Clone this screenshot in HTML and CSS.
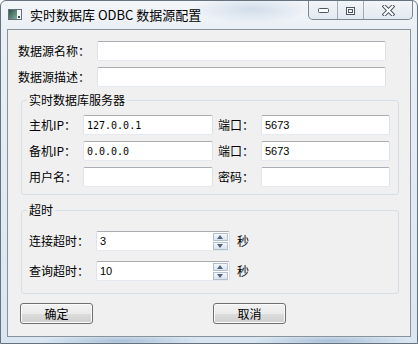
FILE: index.html
```html
<!DOCTYPE html>
<html lang="zh-CN">
<head>
    <meta charset="UTF-8">
    <meta name="viewport" content="width=device-width, initial-scale=1.0">
    <title>实时数据库 ODBC 数据源配置</title>
    <link rel="stylesheet" href="styles.css">
</head>
<body>
    <div class="window">
        <div class="titlebar">
            <svg class="app-icon" width="14" height="11" viewBox="0 0 14 11">
                <defs>
                    <linearGradient id="ig" x1="0" y1="0" x2="1" y2="1">
                        <stop offset="0" stop-color="#2c5246"/>
                        <stop offset="1" stop-color="#7fb0a0"/>
                    </linearGradient>
                </defs>
                <rect x="0.5" y="0.5" width="13" height="10" fill="#f4f6f8" stroke="#66717c"/>
                <rect x="1" y="1" width="8" height="9" fill="url(#ig)"/>
                <rect x="10" y="7" width="2" height="2" fill="#3d4a56"/>
            </svg>
            <span class="title">实时数据库 ODBC 数据源配置</span>
            <div class="caption">
                <div class="cap-btn cap-min">
                    <svg width="11" height="5" viewBox="0 0 11 5"><rect x="0.5" y="0.5" width="10" height="4" rx="1" fill="#fff" stroke="#4b5662"/></svg>
                </div>
                <div class="cap-btn cap-max">
                    <svg width="9" height="8" viewBox="0 0 9 8"><rect x="0.5" y="0.5" width="8" height="7" fill="#fff" stroke="#4b5662"/><rect x="2.5" y="2.5" width="4" height="3" fill="none" stroke="#4b5662"/></svg>
                </div>
                <div class="cap-btn cap-close">
                    <svg width="13" height="11" viewBox="0 0 13 11">
                        <path d="M2.5 1.5 L10.5 9.5 M10.5 1.5 L2.5 9.5" stroke="#4b5662" stroke-width="4" stroke-linecap="square"/>
                        <path d="M2.5 1.5 L10.5 9.5 M10.5 1.5 L2.5 9.5" stroke="#fff" stroke-width="2" stroke-linecap="square"/>
                    </svg>
                </div>
            </div>
        </div>

        <div class="client">
            <div class="row">
                <label class="lbl lbl-wide">数据源名称：</label>
                <input class="edit edit-long" type="text">
            </div>
            <div class="row">
                <label class="lbl lbl-wide">数据源描述：</label>
                <input class="edit edit-long" type="text">
            </div>

            <fieldset class="group group-server">
                <legend>实时数据库服务器</legend>
                <div class="row">
                    <label class="lbl lbl-ip">主机IP：</label>
                    <input class="edit edit-ip mono" type="text" value="127.0.0.1">
                    <label class="lbl lbl-port">端口：</label>
                    <input class="edit edit-port" type="text" value="5673">
                </div>
                <div class="row">
                    <label class="lbl lbl-ip">备机IP：</label>
                    <input class="edit edit-ip mono" type="text" value="0.0.0.0">
                    <label class="lbl lbl-port">端口：</label>
                    <input class="edit edit-port" type="text" value="5673">
                </div>
                <div class="row">
                    <label class="lbl lbl-ip">用户名：</label>
                    <input class="edit edit-ip" type="text">
                    <label class="lbl lbl-port">密码：</label>
                    <input class="edit edit-port" type="password">
                </div>
            </fieldset>

            <fieldset class="group group-timeout">
                <legend>超时</legend>
                <div class="row">
                    <label class="lbl lbl-time">连接超时：</label>
                    <div class="spin">
                        <input type="text" value="3">
                        <div class="spin-btns">
                            <span class="spin-btn spin-up"></span>
                            <span class="spin-btn spin-down"></span>
                        </div>
                    </div>
                    <span class="unit">秒</span>
                </div>
                <div class="row">
                    <label class="lbl lbl-time">查询超时：</label>
                    <div class="spin">
                        <input type="text" value="10">
                        <div class="spin-btns">
                            <span class="spin-btn spin-up"></span>
                            <span class="spin-btn spin-down"></span>
                        </div>
                    </div>
                    <span class="unit">秒</span>
                </div>
            </fieldset>

            <div class="buttons">
                <button class="btn">确定</button>
                <button class="btn">取消</button>
            </div>
        </div>
    </div>
</body>
</html>
```

FILE: styles.css
```css
body {
    margin: 0;
    font-family: "Noto Sans CJK SC", sans-serif;
    font-size: 12px;
    color: #000;
}
.window {
    width: 418px;
    height: 344px;
    box-sizing: border-box;
    border: 1px solid #66737f;
    border-radius: 6px 6px 0 0;
    padding: 0 6px 6px;
    overflow: hidden;
    background:
        radial-gradient(ellipse 60px 14px at 250px 8px, rgba(150, 180, 210, 0.35), rgba(150, 180, 210, 0)),
        radial-gradient(ellipse 80px 6px at 120px 340px, rgba(80, 120, 170, 0.35), rgba(80, 120, 170, 0)),
        radial-gradient(ellipse 80px 6px at 330px 340px, rgba(80, 120, 170, 0.35), rgba(80, 120, 170, 0)),
        linear-gradient(#f4f6f9 0, #e9eff5 30px, #d9e6f1 100%);
}
.titlebar {
    display: flex;
    height: 28px;
}
.app-icon {
    margin: 8px 0 0 1px;
    flex: none;
}
.title {
    margin: 6px auto 0 8px;
    font-size: 13px;
    line-height: 16px;
    white-space: nowrap;
}
.caption {
    display: flex;
    height: 20px;
    margin: -1px -2px 0 0;
    box-sizing: border-box;
    border: 1px solid #7d8893;
    border-top: none;
    border-radius: 0 0 5px 5px;
    background: linear-gradient(#f3f6f9, #e2e9f0);
    overflow: hidden;
}
.cap-btn {
    display: flex;
    justify-content: center;
    align-items: center;
    box-sizing: border-box;
    height: 19px;
    padding-top: 2px;
}
.cap-min {
    width: 29px;
    border-right: 1px solid #a3adb7;
}
.cap-max {
    width: 26px;
    border-right: 1px solid #a3adb7;
}
.cap-close {
    width: 48px;
}
.client {
    height: 308px;
    box-sizing: border-box;
    border: 1px solid #89939c;
    background: #f0f0f0;
    padding: 11px 0 0 10px;
}
.row {
    display: flex;
    align-items: center;
    height: 20px;
}
.row + .row {
    margin-top: 6px;
}
.lbl {
    flex: none;
    line-height: 14px;
    white-space: nowrap;
}
.lbl-wide {
    width: 79px;
}
.lbl-ip {
    width: 54px;
}
.lbl-port {
    width: 43px;
    margin-left: 5px;
}
.lbl-time {
    width: 67px;
}
.edit {
    box-sizing: border-box;
    height: 20px;
    margin: 0;
    padding: 0 3px;
    border: 1px solid;
    border-color: #abadb3 #dbdfe6 #e3e9ef #e2e3ea;
    border-radius: 2px;
    background: #fff;
    font-family: "Liberation Sans", sans-serif;
    font-size: 11px;
    color: #000;
    outline: none;
}
.mono {
    font-family: "DejaVu Sans Mono", monospace;
    font-size: 10px;
}
.edit-long {
    width: 289px;
}
.edit-ip {
    width: 130px;
}
.edit-port {
    width: 129px;
}
.group {
    box-sizing: border-box;
    width: 378px;
    margin: 0 0 0 3px;
    border: 1px solid #d5dfe5;
    border-radius: 3px;
    padding: 8px 0 7px 7px;
}
.group legend {
    padding: 0 2px;
    margin-left: -2px;
    line-height: 14px;
}
.group-server {
    margin-top: 6px;
}
.group-timeout {
    margin-top: 8px;
    padding-top: 14px;
    padding-bottom: 12px;
}
.group-timeout .row + .row {
    margin-top: 10px;
}
.spin {
    display: flex;
    align-items: center;
    box-sizing: border-box;
    width: 134px;
    height: 20px;
    border: 1px solid;
    border-color: #abadb3 #dbdfe6 #e3e9ef #e2e3ea;
    border-radius: 2px;
    background: #fff;
}
.spin input {
    flex: 1;
    min-width: 0;
    height: 18px;
    border: none;
    padding: 0 3px;
    margin: 0;
    font-family: "Liberation Sans", sans-serif;
    font-size: 11px;
    outline: none;
    background: transparent;
}
.spin-btns {
    display: flex;
    flex-direction: column;
    gap: 1px;
    margin-right: 1px;
}
.spin-btn {
    position: relative;
    box-sizing: border-box;
    width: 15px;
    height: 8px;
    border: 1px solid #b4bfcc;
    background: linear-gradient(#f6f8fb, #dbe3ec);
}
.spin-btn::after {
    content: "";
    position: absolute;
    left: 3px;
    border-left: 3.5px solid transparent;
    border-right: 3.5px solid transparent;
}
.spin-up::after {
    top: 1px;
    border-bottom: 4px solid #4e6384;
}
.spin-down::after {
    top: 1px;
    border-top: 4px solid #4e6384;
}
.unit {
    margin-left: 7px;
    line-height: 14px;
}
.buttons {
    display: flex;
    gap: 120px;
    margin-top: 9px;
    padding-left: 2px;
}
.btn {
    width: 73px;
    height: 21px;
    padding: 0;
    border: 1px solid #707070;
    border-radius: 3px;
    background: linear-gradient(#f2f2f2 0%, #ebebeb 50%, #dddddd 51%, #cfcfcf 100%);
    box-shadow: inset 0 0 0 1px #fbfbfb;
    font-family: "Noto Sans CJK SC", sans-serif;
    font-size: 12px;
    line-height: 14px;
    color: #000;
}
```
